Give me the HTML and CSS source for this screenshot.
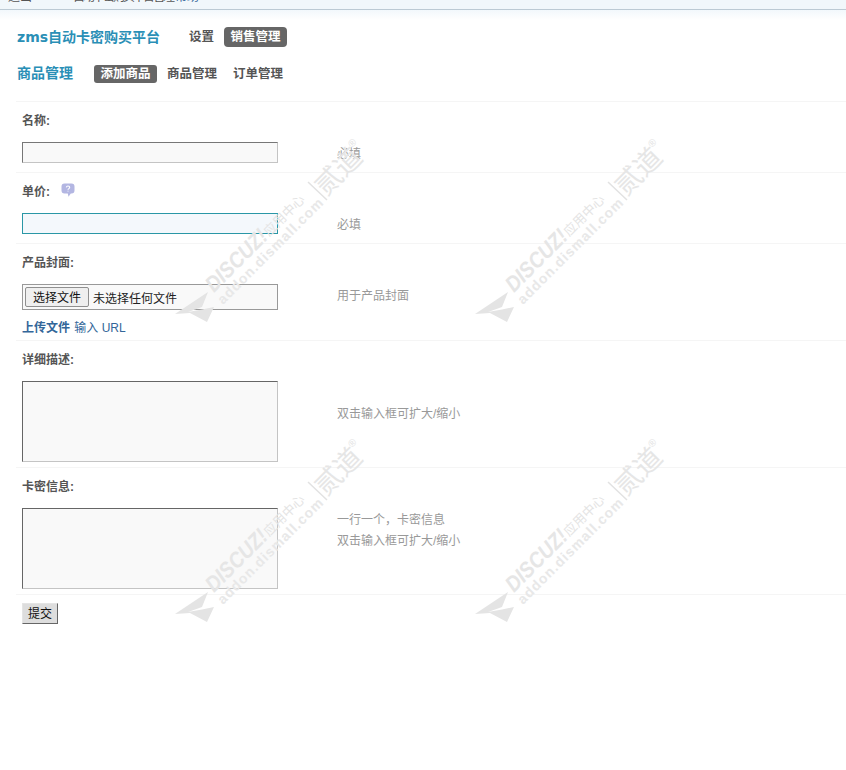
FILE: index.html
```html
<!DOCTYPE html>
<html lang="zh-CN">
<head>
<meta charset="utf-8">
<title>zms自动卡密购买平台</title>
<link rel="stylesheet" href="styles.css">
</head>
<body>
<div class="topbar"><div class="topbar-text"><span class="tb-a">退出</span><span class="tb-b">自动卡密购买平台管理</span><span class="tb-c">帮助</span></div></div>
<div class="topfade"></div>
<main class="page">
  <div class="navrow navrow-first">
    <h1 class="title">zms自动卡密购买平台</h1>
    <nav class="tabs tabs-main"><a class="tab">设置</a><a class="tab tab-on tab-wide">销售管理</a></nav>
  </div>
  <div class="navrow navrow-second">
    <h2 class="title title-sub">商品管理</h2>
    <nav class="tabs tabs-sub"><a class="tab tab-on tab-pill">添加商品</a><a class="tab">商品管理</a><a class="tab">订单管理</a></nav>
  </div>
  <form class="form">
    <section class="row">
      <div class="label">名称:</div>
      <div class="field"><div class="control"><input class="input" type="text"></div><div class="tip">必填</div></div>
    </section>
    <section class="row">
      <div class="label">单价:<svg class="help" viewBox="0 0 14 14" aria-hidden="true"><path class="help-bubble" d="M3.500 .5h7A3 3 0 0 1 13.500 3.500v4A3 3 0 0 1 10.500 10.500H9.800L7.500 13.800 6.800 10.500H3.500A3 3 0 0 1 .5 7.500v-4A3 3 0 0 1 3.500 .5z"/><path class="help-mark" d="M5.300 4.300C5.500 3.500 6.200 3 7 3c1 0 1.700.6 1.700 1.400 0 1.200-1.700 1.200-1.700 2.400M7 7.700v.9"/></svg></div>
      <div class="field"><div class="control"><input class="input input-focus" type="text"></div><div class="tip">必填</div></div>
    </section>
    <section class="row row-file">
      <div class="label">产品封面:</div>
      <div class="field"><div class="control"><div class="filebox"><button class="filebtn" type="button">选择文件</button><span class="filename">未选择任何文件</span></div></div><div class="tip">用于产品封面</div></div>
      <div class="links"><a class="link-strong">上传文件</a> <a class="link">输入 URL</a></div>
    </section>
    <section class="row row-area">
      <div class="label">详细描述:</div>
      <div class="field"><div class="control"><textarea class="area"></textarea></div><div class="tip tip-low">双击输入框可扩大/缩小</div></div>
    </section>
    <section class="row row-area">
      <div class="label">卡密信息:</div>
      <div class="field"><div class="control"><textarea class="area"></textarea></div><div class="tip">一行一个，卡密信息<br>双击输入框可扩大/缩小</div></div>
    </section>
    <div class="submitrow"><button class="submit" type="button">提交</button></div>
  </form>
</main>

<svg class="wm wm-a" viewBox="0 0 195 195" aria-hidden="true">
  <path class="wm-plane" d="M0 179 33 157 27 172 13 177 27 174.500 39 172 32 187 15 178z"/>
  <text class="wm-brand" textLength="78" lengthAdjust="spacingAndGlyphs" transform="translate(39 158) rotate(-45)">DISCUZ!</text>
  <text class="wm-cn" transform="translate(94 102) rotate(-45)">应用中心</text>
  <path class="wm-bar" d="M133 47 152 65"/>
  <text class="wm-big" transform="translate(151 62) rotate(-45)">贰道</text>
  <text class="wm-url" textLength="143" lengthAdjust="spacing" transform="translate(48 170) rotate(-45)">addon.dismall.com</text>
  <text class="wm-reg" transform="translate(177 13) rotate(-45)">®</text>
</svg>
<svg class="wm wm-b" viewBox="0 0 195 195" aria-hidden="true">
  <path class="wm-plane" d="M0 179 33 157 27 172 13 177 27 174.500 39 172 32 187 15 178z"/>
  <text class="wm-brand" textLength="78" lengthAdjust="spacingAndGlyphs" transform="translate(39 158) rotate(-45)">DISCUZ!</text>
  <text class="wm-cn" transform="translate(94 102) rotate(-45)">应用中心</text>
  <path class="wm-bar" d="M133 47 152 65"/>
  <text class="wm-big" transform="translate(151 62) rotate(-45)">贰道</text>
  <text class="wm-url" textLength="143" lengthAdjust="spacing" transform="translate(48 170) rotate(-45)">addon.dismall.com</text>
  <text class="wm-reg" transform="translate(177 13) rotate(-45)">®</text>
</svg>
<svg class="wm wm-c" viewBox="0 0 195 195" aria-hidden="true">
  <path class="wm-plane" d="M0 179 33 157 27 172 13 177 27 174.500 39 172 32 187 15 178z"/>
  <text class="wm-brand" textLength="78" lengthAdjust="spacingAndGlyphs" transform="translate(39 158) rotate(-45)">DISCUZ!</text>
  <text class="wm-cn" transform="translate(94 102) rotate(-45)">应用中心</text>
  <path class="wm-bar" d="M133 47 152 65"/>
  <text class="wm-big" transform="translate(151 62) rotate(-45)">贰道</text>
  <text class="wm-url" textLength="143" lengthAdjust="spacing" transform="translate(48 170) rotate(-45)">addon.dismall.com</text>
  <text class="wm-reg" transform="translate(177 13) rotate(-45)">®</text>
</svg>
<svg class="wm wm-d" viewBox="0 0 195 195" aria-hidden="true">
  <path class="wm-plane" d="M0 179 33 157 27 172 13 177 27 174.500 39 172 32 187 15 178z"/>
  <text class="wm-brand" textLength="78" lengthAdjust="spacingAndGlyphs" transform="translate(39 158) rotate(-45)">DISCUZ!</text>
  <text class="wm-cn" transform="translate(94 102) rotate(-45)">应用中心</text>
  <path class="wm-bar" d="M133 47 152 65"/>
  <text class="wm-big" transform="translate(151 62) rotate(-45)">贰道</text>
  <text class="wm-url" textLength="143" lengthAdjust="spacing" transform="translate(48 170) rotate(-45)">addon.dismall.com</text>
  <text class="wm-reg" transform="translate(177 13) rotate(-45)">®</text>
</svg>
</body>
</html>
```
FILE: styles.css
```css
* { box-sizing: border-box; }
html, body { margin: 0; height: 770px; overflow: hidden; background: #fff; }
body {
  position: relative;
  font-family: "Liberation Sans", "Noto Sans CJK SC", sans-serif;
  font-size: 12px;
  color: #555;
}

.topbar {
  height: 10px;
  background: #f1f7fb;
  border-bottom: 1px solid #bccad4;
  overflow: hidden;
}
.topbar-text {
  display: flex;
  margin-top: -11px;
  height: 16px;
  line-height: 16px;
  font-size: 12px;
  color: #555;
  white-space: nowrap;
}
.tb-a { margin-left: 8px; width: 65px; }
.tb-b { width: 102px; letter-spacing: -2px; }
.tb-c { color: #369; }
.topfade { height: 10px; background: linear-gradient(#f2f8fc, #fff); }

.page { padding-top: 7px; }
.navrow { display: flex; align-items: center; padding-left: 17px; }
.navrow-first { height: 20px; }
.navrow-second { height: 18px; margin-top: 18px; }
.title {
  margin: 0;
  font-family: "DejaVu Sans", "Noto Sans CJK SC", sans-serif;
  font-size: 14px;
  line-height: 20px;
  font-weight: bold;
  color: #2a8fb6;
}
.title-sub { margin-top: -2px; }
.tabs { display: flex; align-items: stretch; height: 100%; }
.tabs-main { margin-left: 23px; gap: 4px; }
.tabs-sub { margin-left: 21px; gap: 4px; }
.tab {
  padding: 0 6px;
  font-size: 12.500px;
  font-weight: bold;
  line-height: 18px;
  color: #555;
  display: flex;
  align-items: center;
}
.tab-on { background: #666; color: #fff; border-radius: 3px; }
.tab-wide { padding: 0 6.500px; border-radius: 4px; }
.tab-pill { padding: 0 6.500px; }

.form { margin: 18px 0 0 16px; }
.row { border-top: 1px solid #f5f5f5; padding: 0 0 9px 6px; }
.row-file { padding-bottom: 2px; }
.row-area { padding-bottom: 5px; }
.label {
  display: flex;
  align-items: center;
  height: 40px;
  padding-bottom: 4px;
  padding-top: 1px;
  font-weight: bold;
  line-height: 16px;
  color: #555;
}
.help { width: 14px; height: 14px; margin: 0 0 3px 11px; }
.help-bubble { fill: #b3b6e2; }
.help-mark { fill: none; stroke: #fff; stroke-width: 1.100; }

.field { display: grid; grid-template-columns: 315px 1fr; }
.control { display: flex; }
.tip { color: #999; line-height: 21px; padding-top: 2px; margin-bottom: -2px; }
.tip-low { margin-top: 21px; }

.input {
  display: block;
  width: 256px;
  height: 21px;
  margin: 0;
  padding: 0;
  border: 1px solid;
  border-color: #777 #c4c4c4 #c4c4c4 #777;
  background: #f9f9f9;
  outline: 0;
}
.input-focus { border-color: #2a97a6; background: #f4f8fc; }
.filebox {
  display: flex;
  align-items: center;
  width: 256px;
  height: 26px;
  padding-left: 2px;
  border: 1px solid #999;
  background: #f9f9f9;
}
.filebtn {
  width: 64px;
  height: 20px;
  margin: 0;
  padding: 1px 0 0;
  border: 1px solid #8f8f8f;
  border-radius: 2px;
  background: #efefef;
  color: #111;
  font: 12px/18px "Liberation Sans", "Noto Sans CJK SC", sans-serif;
}
.filename { margin-left: 4px; color: #222; }
.links { height: 20px; margin-top: 8px; line-height: 20px; color: #369; }
.link-strong { font-weight: bold; color: #369; margin-right: 1px; }
.link { color: #369; }
.area {
  display: block;
  width: 256px;
  height: 81px;
  margin: 0;
  padding: 0;
  border: 1px solid;
  border-color: #666 #c4c4c4 #c4c4c4 #666;
  background: #f9f9f9;
  resize: none;
  outline: 0;
}

.submitrow { border-top: 1px solid #f5f5f5; padding: 8px 0 0 6px; }
.submit {
  display: block;
  width: 36px;
  height: 21px;
  padding: 2px 0 0;
  border: 1px solid;
  border-color: #e4e4e4 #666 #666 #e4e4e4;
  background: #ddd;
  color: #111;
  font: 12px/17px "Liberation Sans", "Noto Sans CJK SC", sans-serif;
}

.wm { position: absolute; width: 195px; height: 195px; pointer-events: none; overflow: visible; }
.wm-a { left: 175px; top: 135px; }
.wm-b { left: 475px; top: 135px; }
.wm-c { left: 175px; top: 435px; }
.wm-d { left: 475px; top: 435px; }
.wm-plane { fill: #e4e4e4; }
.wm-brand { font: italic bold 22px "Liberation Sans", sans-serif; fill: #e6e6e6; }
.wm-cn { font: 13px "Noto Sans CJK SC", sans-serif; fill: #e4e4e4; }
.wm-bar { stroke: #e2e2e2; stroke-width: 1.500; fill: none; }
.wm-big { font: 27px "Noto Sans CJK SC", sans-serif; fill: #e6e6e6; }
.wm-url { font: bold 14px "Liberation Sans", sans-serif; fill: #e8e8e8; }
.wm-reg { font: 10px "Liberation Sans", sans-serif; fill: #e2e2e2; }
```
